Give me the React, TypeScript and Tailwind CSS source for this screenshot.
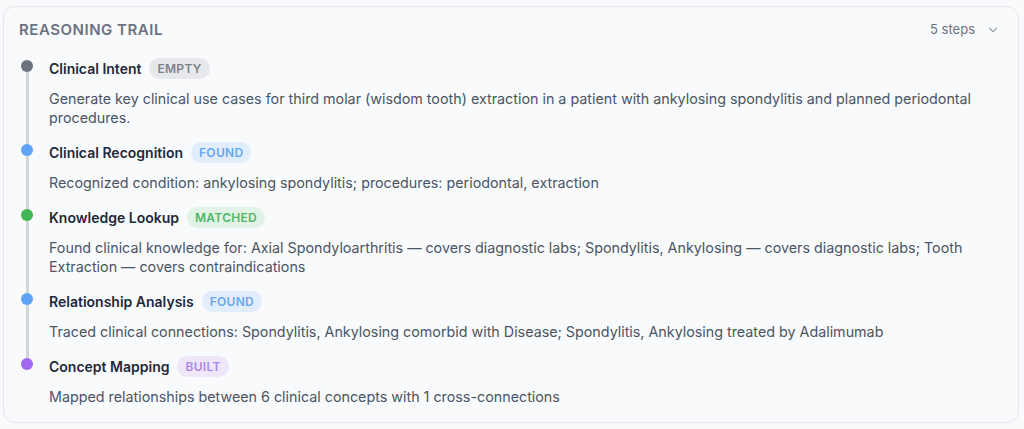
import React from 'react';
import { ChevronDown } from 'lucide-react';

type Step = {
  title: string;
  badge: string;
  dot: string;
  badgeClass: string;
  text: string;
};

const steps: Step[] = [
  {
    title: 'Clinical Intent',
    badge: 'EMPTY',
    dot: 'bg-[#6b7280]',
    badgeClass: 'bg-[#e6e8eb] text-[#7b818b]',
    text: 'Generate key clinical use cases for third molar (wisdom tooth) extraction in a patient with ankylosing spondylitis and planned periodontal procedures.',
  },
  {
    title: 'Clinical Recognition',
    badge: 'FOUND',
    dot: 'bg-[#5ea3f6]',
    badgeClass: 'bg-[#e2edfb] text-[#66a7ef]',
    text: 'Recognized condition: ankylosing spondylitis; procedures: periodontal, extraction',
  },
  {
    title: 'Knowledge Lookup',
    badge: 'MATCHED',
    dot: 'bg-[#3fb754]',
    badgeClass: 'bg-[#e1f2e6] text-[#4cb866]',
    text: 'Found clinical knowledge for: Axial Spondyloarthritis — covers diagnostic labs; Spondylitis, Ankylosing — covers diagnostic labs; Tooth Extraction — covers contraindications',
  },
  {
    title: 'Relationship Analysis',
    badge: 'FOUND',
    dot: 'bg-[#5ea3f6]',
    badgeClass: 'bg-[#e2edfb] text-[#66a7ef]',
    text: 'Traced clinical connections: Spondylitis, Ankylosing comorbid with Disease; Spondylitis, Ankylosing treated by Adalimumab',
  },
  {
    title: 'Concept Mapping',
    badge: 'BUILT',
    dot: 'bg-[#a467f2]',
    badgeClass: 'bg-[#eee7fa] text-[#ad86ea]',
    text: 'Mapped relationships between 6 clinical concepts with 1 cross-connections',
  },
];

export default function App() {
  return (
    <div className="min-h-[429px] bg-gray-50 pt-[6px] pl-[3px] font-['Inter',sans-serif]">
      <div className="w-[1016px] rounded-xl border border-gray-200 bg-gray-50 pl-[15px] pr-[18px] pt-[13px] pb-4">
        <div className="flex items-center justify-between h-5">
          <h3 className="text-[15px] font-semibold uppercase tracking-[0.035em] text-gray-500">Reasoning Trail</h3>
          <div className="flex items-center gap-[11px] text-[13px] text-gray-500">
            <span>5 steps</span>
            <ChevronDown size={14} className="text-gray-400" />
          </div>
        </div>

        <div className="mt-[18px] pl-[2px]">
          {steps.map((s, i) => {
            const last = i === steps.length - 1;
            return (
              <div key={i} className="flex gap-4">
                <div className="relative w-3 shrink-0">
                  {!last && <div className="absolute left-[4.5px] top-2 bottom-0 w-[3px] bg-gray-300" />}
                  {i > 0 && <div className="absolute left-[4.5px] top-0 h-2 w-[3px] bg-gray-300" />}
                  <div className={`relative mt-[2px] h-3 w-3 rounded-full ${s.dot}`} />
                </div>
                <div className={last ? '' : 'pb-[15px]'}>
                  <div className="flex items-center gap-2 h-[21px]">
                    <span className="text-sm font-semibold text-gray-800">{s.title}</span>
                    <span className={`flex h-[21px] items-center rounded-full px-2 text-xs font-semibold tracking-wide ${s.badgeClass}`}>
                      {s.badge}
                    </span>
                  </div>
                  <p className="mt-[10px] text-[14.3px] leading-[19px] text-gray-600">{s.text}</p>
                </div>
              </div>
            );
          })}
        </div>
      </div>
    </div>
  );
}
